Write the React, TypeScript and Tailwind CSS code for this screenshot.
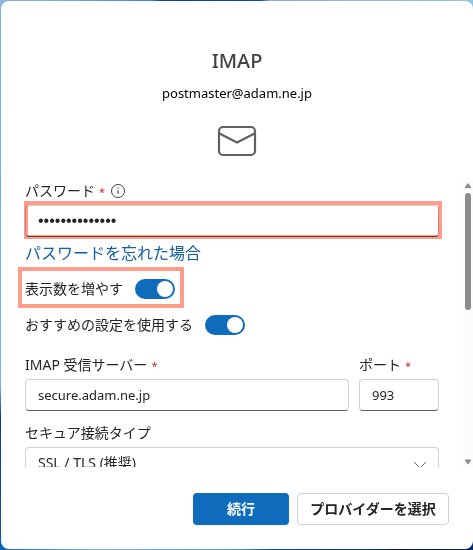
import React, { useState } from 'react'

type FieldProps = {
    id: string
    label: string
    required?: boolean
    className?: string
    children: React.ReactNode
}

const inputStyle =
    'block h-8 w-full rounded-[4px] border border-[#d1d1d1] border-b-[#616161] bg-white px-3 text-[#242424]'

const Required = () => (
    <span className="ml-1 text-[11px] leading-none text-[#bc2f32]">*</span>
)

const Field = ({ id, label, required, className, children }: FieldProps) => {
    return (
        <div className={className}>
            <label htmlFor={id} className="mb-1 block">
                {label}
                {required && <Required />}
            </label>
            {children}
        </div>
    )
}

type ToggleProps = {
    id: string
    label: string
    checked: boolean
    onChange: (checked: boolean) => void
}

const Toggle = ({ id, label, checked, onChange }: ToggleProps) => {
    return (
        <div className="flex items-center gap-3">
            <label htmlFor={id}>{label}</label>
            <input
                id={id}
                type="checkbox"
                role="switch"
                checked={checked}
                onChange={(e) => onChange(e.target.checked)}
                className="flex h-5 w-10 appearance-none items-center rounded-full bg-[#8a8a8a] px-0.5 before:block before:size-4 before:rounded-full before:bg-white checked:justify-end checked:bg-[#0f6cbd]"
            />
        </div>
    )
}

const MailIcon = () => (
    <svg
        width="40"
        height="40"
        viewBox="0 0 40 40"
        fill="none"
        stroke="#616161"
        strokeWidth="2.2"
        aria-hidden="true"
    >
        <rect x="2" y="6" width="36" height="28" rx="4" />
        <path d="M2.500 12.500L20 21.500L37.500 12.500" />
    </svg>
)

const InfoIcon = () => (
    <svg
        width="14"
        height="14"
        viewBox="0 0 14 14"
        fill="none"
        stroke="#424242"
        aria-hidden="true"
    >
        <circle cx="7" cy="7" r="6.500" />
        <path d="M7 6v4" />
        <circle cx="7" cy="4.200" r="0.700" fill="#424242" stroke="none" />
    </svg>
)

const ScrollRail = () => (
    <div className="flex w-2.5 flex-col items-center bg-[#fcfcfc]" aria-hidden="true">
        <svg width="10" height="12" viewBox="0 0 10 12" fill="#8b8b8b">
            <path d="M4.500 2.500h1L8 6v1H2V6z" />
        </svg>
        <div className="h-[41%] w-1.5 rounded-full bg-[#8b8b8b]" />
        <svg
            width="10"
            height="12"
            viewBox="0 0 10 12"
            fill="#8b8b8b"
            className="mt-auto"
        >
            <path d="M2 4.500h6v1L5.500 9h-1L2 5.500z" />
        </svg>
    </div>
)

const App = () => {
    const [password, setPassword] = useState('postmaster1234')
    const [server, setServer] = useState('secure.adam.ne.jp')
    const [port, setPort] = useState('993')
    const [showMore, setShowMore] = useState(true)
    const [recommended, setRecommended] = useState(true)

    return (
        <div className="h-screen bg-[linear-gradient(180deg,#7db0e0,#5fb4ee_35%,#7fb2f0_70%,#0a3a9c_76%,#0a56b8)] font-['Noto_Sans','Noto_Sans_CJK_JP',sans-serif] text-[14px] leading-5 text-[#242424]">
            <div className="h-full bg-[linear-gradient(90deg,#8fb4dc,#6fa5de_15%,#3f84d8_32%,#0a3f98_34%,#0a4fa8_55%,#86a8dc_57%,#8fc4ea),linear-gradient(90deg,#0a62b8,#7abce8_20%,#4a9ad8_50%,#0a4f98_57%,#003a80_80%,#001440_84%,#002a70)] bg-[length:100%_8px] bg-[position:top,bottom] bg-no-repeat py-px pl-px">
                <main className="flex h-full flex-col rounded-lg bg-white">
                    <header className="flex flex-col items-center pt-[46px] pb-5">
                        <h1 className="text-[20px] leading-7 font-medium text-[#424242]">
                            IMAP
                        </h1>
                        <p className="mt-2 mb-[18px] text-[13px] text-black">
                            postmaster@adam.ne.jp
                        </p>
                        <MailIcon />
                    </header>

                    <form id="account" className="flex min-h-0 flex-1">
                        <div className="min-w-0 flex-1 overflow-hidden px-6">
                            <div className="mb-1 flex h-5 items-center">
                                <label htmlFor="password">
                                    パスワード
                                    <Required />
                                </label>
                                <button
                                    type="button"
                                    aria-label="パスワードの情報"
                                    className="ml-1.5"
                                >
                                    <InfoIcon />
                                </button>
                            </div>
                            <div className="relative">
                                <input
                                    id="password"
                                    type="password"
                                    value={password}
                                    onChange={(e) => setPassword(e.target.value)}
                                    className={`${inputStyle} font-['Liberation_Sans',sans-serif] text-[16px]`}
                                />
                                <span className="pointer-events-none absolute -top-1 -right-[3px] -bottom-0.5 -left-px border-4 border-[#ff9c8b] mix-blend-multiply" />
                            </div>
                            <a
                                href="#forgot"
                                className="mt-1.5 block w-fit text-[16px] text-[#115ea3]"
                            >
                                パスワードを忘れた場合
                            </a>

                            <div className="relative mt-4 w-fit">
                                <Toggle
                                    id="show-more"
                                    label="表示数を増やす"
                                    checked={showMore}
                                    onChange={setShowMore}
                                />
                                <span className="pointer-events-none absolute -top-3 -right-[9px] -bottom-[9px] -left-[7px] border-4 border-[#ff9c8b]" />
                            </div>
                            <div className="mt-4">
                                <Toggle
                                    id="recommended"
                                    label="おすすめの設定を使用する"
                                    checked={recommended}
                                    onChange={setRecommended}
                                />
                            </div>

                            <div className="mt-5 flex gap-2.5">
                                <Field
                                    id="server"
                                    label="IMAP 受信サーバー"
                                    required
                                    className="min-w-0 flex-1"
                                >
                                    <input
                                        id="server"
                                        type="text"
                                        value={server}
                                        onChange={(e) => setServer(e.target.value)}
                                        className={`${inputStyle} text-[13px]`}
                                    />
                                </Field>
                                <Field id="port" label="ポート" required className="w-20">
                                    <input
                                        id="port"
                                        type="text"
                                        inputMode="numeric"
                                        value={port}
                                        onChange={(e) => setPort(e.target.value)}
                                        className={`${inputStyle} text-[13px]`}
                                    />
                                </Field>
                            </div>

                            <Field id="security" label="セキュア接続タイプ" className="mt-3">
                                <div className="relative">
                                    <select
                                        id="security"
                                        className={`${inputStyle} appearance-none`}
                                    >
                                        <option>SSL / TLS (推奨)</option>
                                        <option>StartTLS</option>
                                        <option>なし</option>
                                    </select>
                                    <svg
                                        width="14"
                                        height="8"
                                        viewBox="0 0 14 8"
                                        fill="none"
                                        stroke="#616161"
                                        className="pointer-events-none absolute top-3.5 right-3"
                                        aria-hidden="true"
                                    >
                                        <path d="M1 1l6 6 6-6" />
                                    </svg>
                                </div>
                            </Field>
                        </div>
                        <ScrollRail />
                    </form>

                    <footer className="flex justify-end gap-2 px-6 pt-[26px] pb-6 font-bold">
                        <button
                            type="submit"
                            form="account"
                            className="h-8 w-24 rounded-[4px] bg-[#0f6cbd] text-white"
                        >
                            続行
                        </button>
                        <button
                            type="button"
                            className="h-8 w-38 rounded-[4px] border border-[#d1d1d1] bg-white"
                        >
                            プロバイダーを選択
                        </button>
                    </footer>
                </main>
            </div>
        </div>
    )
}

export default App
